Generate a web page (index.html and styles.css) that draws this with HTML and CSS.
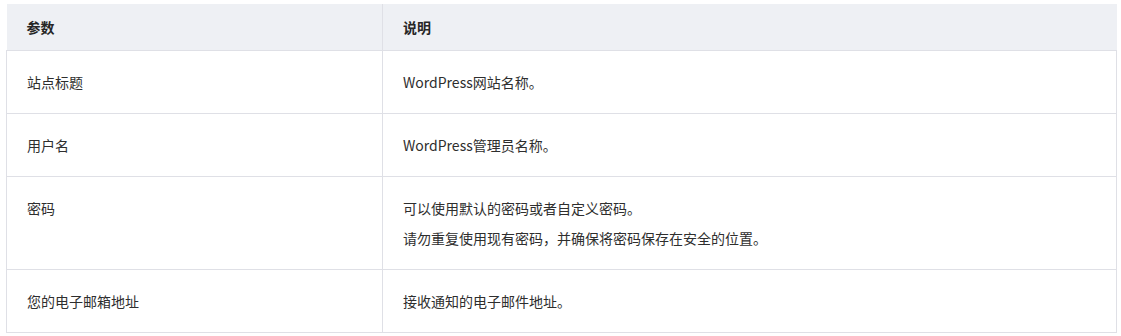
FILE: index.html
```html
<!DOCTYPE html>
<html lang="zh-CN">
<head>
<meta charset="utf-8">
<title>参数说明</title>
<link rel="stylesheet" href="styles.css">
</head>
<body>
<table class="params">
  <colgroup>
    <col class="col-name">
    <col class="col-desc">
  </colgroup>
  <thead>
    <tr><th>参数</th><th>说明</th></tr>
  </thead>
  <tbody>
    <tr><td><p>站点标题</p></td><td><p>WordPress网站名称。</p></td></tr>
    <tr><td><p>用户名</p></td><td><p>WordPress管理员名称。</p></td></tr>
    <tr><td><p>密码</p></td><td><p>可以使用默认的密码或者自定义密码。</p><p>请勿重复使用现有密码，并确保将密码保存在安全的位置。</p></td></tr>
    <tr><td><p>您的电子邮箱地址</p></td><td><p>接收通知的电子邮件地址。</p></td></tr>
  </tbody>
</table>
</body>
</html>
```
FILE: styles.css
```css
html, body {
  background: #ffffff;
}
body {
  margin: 4px 4px 0 6px;
  font-family: "Noto Sans CJK SC", "Noto Sans", sans-serif;
  font-size: 14px;
  color: #2e2e2e;
}
.params {
  width: 1111px;
  border-collapse: collapse;
  table-layout: fixed;
}
.col-name { width: 376px; }
.params th {
  background: #eef0f4;
  text-align: left;
  font-weight: 700;
  line-height: 22px;
  padding: 12px 20px;
  border-bottom: 1px solid #dfe0e6;
  border-left: 1px solid #dfe0e6;
  color: #262626;
}
.params th:first-child {
  border-left: none;
}
.params td {
  padding: 20px 20px;
  border: 1px solid #dfe0e6;
  vertical-align: top;
}
.params p {
  margin: 0;
  line-height: 22px;
}
.params p + p {
  margin-top: 8px;
}
```
